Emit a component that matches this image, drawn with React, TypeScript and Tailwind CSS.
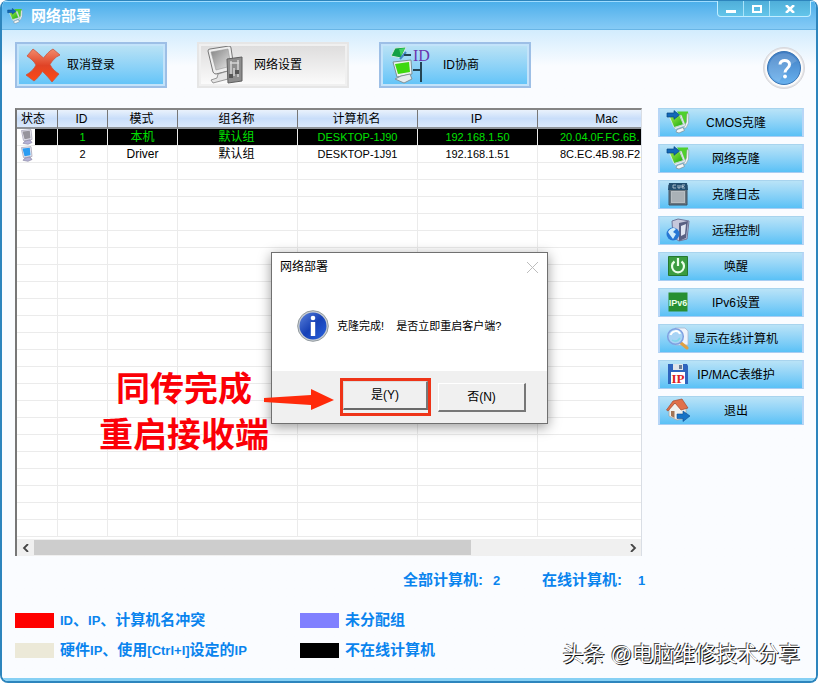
import type { ReactNode } from "react";

const CloneIcon = ({ className }: { className: string }) => (
  <svg viewBox="0 0 24 24" className={className} aria-hidden="true">
    <defs>
      <linearGradient id="screenGreen" x1="0" y1="0" x2="1" y2="1">
        <stop offset="0" stopColor="#a5ec4a" />
        <stop offset="1" stopColor="#12a80e" />
      </linearGradient>
    </defs>
    <path d="M11 1.500 L22 1.500 L22.500 9 L19 15 L15 8Z" fill="#4fd02c" />
    <path d="M21 3.500 L22.800 4 L22.500 13 L20 18 L17.500 18 L20.500 12Z" fill="#f2f6f7" stroke="#8b9da2" strokeWidth="0.6" />
    <path d="M3.500 7 L13.500 5 L17.500 14.500 L8 17.500Z" fill="url(#screenGreen)" stroke="#e4f2ea" strokeWidth="0.8" />
    <path d="M14 5 L15.500 5 L19.500 15.500 L9 19.500 L8.300 17.800 L17.500 14.600Z" fill="#eef3f4" stroke="#93a3a8" strokeWidth="0.4" />
    <path d="M11 19.500 L17 17.500 L18.500 20.500 L13 23 L10 22Z" fill="#f4f7f8" stroke="#7d8c92" strokeWidth="0.7" />
    <path d="M1 3h7V.6L13.500 5 8 9.300V7H1z" fill="#1268b8" stroke="#07457f" strokeWidth="0.7" />
  </svg>
);

const CrossIcon = () => (
  <svg viewBox="0 0 36 36" className="h-9 w-9 shrink-0" aria-hidden="true">
    <defs>
      <linearGradient id="crossRed" x1="0" y1="0" x2="0" y2="1">
        <stop offset="0" stopColor="#f28a6c" />
        <stop offset="0.5" stopColor="#e04326" />
        <stop offset="1" stopColor="#ff4a14" />
      </linearGradient>
    </defs>
    <path d="M8 2 C12 5 15 8 18.500 11 C21 8 24 4 28 2 L35 8 C30 10 27 14 25 17.500 C27 22 31 25 34 27 L27 35 C24 31 21 28 17.500 24.500 C15 28 12 32 9 34 L1 28 C6 25 9 22 11 18 C9 14 5 11 2 9Z" fill="url(#crossRed)" stroke="#c9563f" strokeWidth="0.8" />
  </svg>
);

const GrayComputer = () => (
  <svg viewBox="0 0 36 38" className="h-[38px] w-9 shrink-0" aria-hidden="true">
    <defs>
      <linearGradient id="grayScreen" x1="0" y1="0" x2="1" y2="1">
        <stop offset="0" stopColor="#858585" />
        <stop offset="1" stopColor="#e8e8e8" />
      </linearGradient>
    </defs>
    <path d="M1 5 Q1 3 3 3 L22 0 Q24 0 24 2 L27 22 Q27 24 25 24 L9 28 Q7 28 6 26Z" fill="#eee" stroke="#777" />
    <path d="M4 6 L21 3 L24 20 L9 24Z" fill="url(#grayScreen)" stroke="#999" strokeWidth="0.6" />
    <path d="M11 28l-1 4-6 2 2 3 15-4v-8z" fill="#e5e5e5" stroke="#808080" strokeWidth="0.8" />
    <path d="M20 13l15-2v24l-14 2z" fill="#8d8d8d" stroke="#5f5f5f" />
    <path d="M23 17h9M24 15v17M31 14v17M27 22v8" stroke="#d5d5d5" strokeWidth="1.500" />
    <path d="M22 28h4v4h-4zM28 24h4v4h-4z" fill="#555" />
  </svg>
);

const IdIcon = () => (
  <svg viewBox="0 0 42 38" className="h-[38px] w-[42px] shrink-0" aria-hidden="true">
    <path d="M6 2 L17 1 L12 12 L2 10Z" fill="#14a046" stroke="#d2e8df" />
    <path d="M10 3 L16 2 L12 10Z" fill="#3fd35f" />
    <path d="M11 13l6-7" stroke="#3f86c4" strokeWidth="2" />
    <path d="M15 9h7M24 24h8M32 16v20" stroke="#244453" strokeWidth="2" fill="none" />
    <path d="M4 16 L22 14 L23 28 L8 31Z" fill="#edf2f2" stroke="#7c9196" />
    <path d="M6 18 L20 16 L21 26 L9 28Z" fill="#3ed80f" />
    <path d="M12 30l9-2 2 5-8 4-9-4z" fill="#e6ecef" stroke="#83939a" />
    <text x="24" y="15" fill="#6a35ae" className="font-['Liberation_Serif',serif] text-[16px]">ID</text>
  </svg>
);

const HelpIcon = () => (
  <svg viewBox="0 0 44 44" className="h-11 w-11" aria-hidden="true">
    <defs>
      <linearGradient id="helpBlue" x1="0" y1="0" x2="0" y2="1">
        <stop offset="0" stopColor="#3f7cc2" />
        <stop offset="1" stopColor="#69b2ef" />
      </linearGradient>
    </defs>
    <circle cx="22" cy="22" r="20.500" fill="#e3e3e6" stroke="#d8d8dc" />
    <circle cx="22" cy="22" r="19" fill="#fbfbfb" />
    <circle cx="22" cy="22" r="16.500" fill="url(#helpBlue)" stroke="#3975b5" />
    <path d="M7 24a15 15 0 0 1 28-9C28 18 25 23 17 36A15 15 0 0 1 7 24z" fill="#fff" opacity="0.14" />
    <path d="M18 18.500c0-5.500 9.500-5.500 9.500 0 0 4-4.500 4-4.500 8" fill="none" stroke="#fff" strokeWidth="3" />
    <circle cx="23" cy="30.500" r="1.900" fill="#fff" />
  </svg>
);

const LogIcon = () => (
  <svg viewBox="0 0 24 24" className="h-6 w-6" aria-hidden="true">
    <path d="M3 3h18v20H3z" fill="#69757e" stroke="#3d5364" />
    <path d="M3 1h18l1 7H2z" fill="#234f70" />
    <path d="M5 9h14v12H5z" fill="#b8bec2" />
    <path d="M6 11h12M6 13h12M6 15h12M6 17h12M6 19h12" stroke="#8b959b" strokeWidth="0.6" />
    <path d="M10 3H7v3h3M12 3v3h2V3M19 3h-3v3h3M16 4.500h2" fill="none" stroke="#c2d1dc" strokeWidth="0.8" />
  </svg>
);

const RemoteIcon = () => (
  <svg viewBox="0 0 24 24" className="h-6 w-6" aria-hidden="true">
    <path d="M6 3l6-2 11 2-2 18-8 2-6-4z" fill="#c6c8dc" stroke="#71779b" />
    <path d="M13 5l9-2-2 17-7 3z" fill="#596083" />
    <path d="M15 8l5-2-1 10-4 2z" fill="#dfe4f1" />
    <circle cx="7" cy="16" r="6.500" fill="#2777d4" />
    <path d="M2 14c2-4 6-5 8-3l-3 3 3 2-3 5-3-4z" fill="#d0edfc" />
  </svg>
);

const PowerIcon = () => (
  <svg viewBox="0 0 24 24" className="h-6 w-6" aria-hidden="true">
    <path d="M2.500 2.500h19v19h-19z" fill="#3a9c40" stroke="#247931" />
    <path d="M8.500 7.500a6 6 0 1 0 7 0M12 4v8" fill="none" stroke="#e8ffe8" strokeWidth="2.200" />
  </svg>
);

const Ipv6Icon = () => (
  <svg viewBox="0 0 24 24" className="h-6 w-6" aria-hidden="true">
    <path d="M2.500 2.500h19v19h-19z" fill="#278f32" />
    <text x="12" y="16" textAnchor="middle" fill="#e8ffe8" className="font-['Liberation_Sans',sans-serif] text-[9px] font-bold">IPv6</text>
  </svg>
);

const SearchIcon = () => (
  <svg viewBox="0 0 24 24" className="h-6 w-6" aria-hidden="true">
    <path d="M9 2h10l3 3v14H9z" fill="#eff4fb" stroke="#a9b8cf" strokeWidth="0.8" />
    <path d="M15 17l6 5" stroke="#e0a042" strokeWidth="3" strokeLinecap="round" />
    <circle cx="9.500" cy="10.500" r="7.800" fill="#a8d4f5" stroke="#7f9fe0" strokeWidth="1.500" />
    <path d="M4.500 9c2-5 8-5 9.500-1" fill="none" stroke="#fff" strokeWidth="2" />
    <path d="M6 14c3 2 6 1 8-2" fill="none" stroke="#7fd6ea" strokeWidth="1.500" />
  </svg>
);

const DiskIcon = () => (
  <svg viewBox="0 0 24 24" className="h-6 w-6" aria-hidden="true">
    <path d="M2 2h19l1 2v18H2z" fill="#2e64bd" />
    <path d="M7 2h10v6H7z" fill="#e0e4ea" />
    <path d="M13 3h3v4h-3z" fill="#6b7b94" />
    <path d="M5 10h14v12H5z" fill="#fff" />
    <text x="12" y="21" textAnchor="middle" fill="#dc2222" className="font-['Liberation_Serif',serif] text-[13px] font-bold">IP</text>
  </svg>
);

const ExitIcon = () => (
  <svg viewBox="0 0 24 24" className="h-6 w-6" aria-hidden="true">
    <path d="M3 11l6-6 11 5v10l-9 2-8-4z" fill="#f0f1ef" stroke="#a5a19c" strokeWidth="0.7" />
    <path d="M0.500 12L7 3l9-2 6 9-7 2-6-7-7 8z" fill="#e0704a" stroke="#a3482d" strokeWidth="0.7" />
    <path d="M5 13h3.500v7L5 18z" fill="#a27454" />
    <path d="M11 16h6v-3l7 5-7 5.500v-3h-6z" fill="#1773c6" stroke="#0b4d91" strokeWidth="0.6" />
  </svg>
);

const StatusIcon = ({ online }: { online: boolean }) => (
  <svg viewBox="0 0 14 16" className="ml-[3px] block h-4 w-[14px]" role="img" aria-label={online ? "在线" : "本机"}>
    <path d="M1.500 1.500l9.500-.8 1 9.800-8.500 1z" fill="#ecebf3" stroke="#a6a4b8" strokeWidth="0.8" />
    <path d="M2.500 2.500l7.300-.7.700 7.500-6 .9z" fill={online ? "#2c9df2" : "#96949c"} />
    <path d="M5 12l5-1 2 2.500-4 1.800-5-1z" fill="#b5b2d6" stroke="#7f7c9c" strokeWidth="0.6" />
  </svg>
);

const InfoIcon = () => (
  <svg viewBox="0 0 32 32" className="h-8 w-8 shrink-0" aria-hidden="true">
    <defs>
      <linearGradient id="infoBlue" x1="0" y1="0" x2="1" y2="1">
        <stop offset="0" stopColor="#5c83db" />
        <stop offset="0.5" stopColor="#1741b6" />
        <stop offset="1" stopColor="#2a64de" />
      </linearGradient>
    </defs>
    <circle cx="16" cy="16" r="15.300" fill="#c9ced3" stroke="#929a9f" />
    <circle cx="16" cy="16" r="13.500" fill="url(#infoBlue)" />
    <circle cx="16" cy="8" r="2.300" fill="#fff" />
    <path d="M13.800 12h4.400v14h-4.400z" fill="#fff" />
  </svg>
);

const toolButton = "flex h-[46px] w-[152px] items-center border-2 pl-2 text-xs";

const sideItems: { label: string; icon: ReactNode }[] = [
  { label: "CMOS克隆", icon: <CloneIcon className="h-6 w-6" /> },
  { label: "网络克隆", icon: <CloneIcon className="h-6 w-6" /> },
  { label: "克隆日志", icon: <LogIcon /> },
  { label: "远程控制", icon: <RemoteIcon /> },
  { label: "唤醒", icon: <PowerIcon /> },
  { label: "IPv6设置", icon: <Ipv6Icon /> },
  { label: "显示在线计算机", icon: <SearchIcon /> },
  { label: "IP/MAC表维护", icon: <DiskIcon /> },
  { label: "退出", icon: <ExitIcon /> },
];

const columns = [
  { name: "状态", width: "w-[41px]", pad: "pr-2" },
  { name: "ID", width: "w-[50px]", pad: "pr-0.5" },
  { name: "模式", width: "w-[70px]", pad: "pr-0.5" },
  { name: "组名称", width: "w-[120px]", pad: "pr-0.5" },
  { name: "计算机名", width: "w-[120px]", pad: "pr-0.5" },
  { name: "IP", width: "w-[120px]", pad: "pr-0.5" },
  { name: "Mac", width: "w-[140px]", pad: "pr-0.5" },
];

const rows = [
  { id: "1", mode: "本机", group: "默认组", name: "DESKTOP-1J90", ip: "192.168.1.50", mac: "20.04.0F.FC.6B.", self: true },
  { id: "2", mode: "Driver", group: "默认组", name: "DESKTOP-1J91", ip: "192.168.1.51", mac: "8C.EC.4B.98.F2.", self: false },
];

const En = ({ children }: { children: ReactNode }) => <span className="text-[13px]">{children}</span>;

const Legend = ({ color, children }: { color: string; children: ReactNode }) => (
  <div className="flex h-[30px] items-center gap-[6px]">
    <span className={`h-[15px] w-[39px] shrink-0 ${color}`} />
    <span className="whitespace-nowrap">{children}</span>
  </div>
);

function ComputerTable() {
  return (
    <div className="relative min-w-0 flex-1 border-t-2 border-r border-l-2 border-t-[#858585] border-r-[#d9dee5] border-l-[#777] bg-white">
      <div className="h-[429px] overflow-hidden">
        <table className="w-[661px] table-fixed border-separate border-spacing-0">
          <thead>
            <tr>
              {columns.map((c) => (
                <th key={c.name} className={`${c.width} ${c.pad} h-[19px] border-r border-b-2 border-r-[#777] border-b-[#8f9398] bg-linear-to-b from-[#eaf2fc] via-[#c9defa] to-[#dbe9fc] py-0 pl-0 text-xs leading-4 font-normal`}>
                  {c.name}
                </th>
              ))}
            </tr>
          </thead>
          <tbody>
            {rows.map((r) => {
              const cell = `h-[17px] border-r border-b border-[#ebebeb] py-0 leading-4 whitespace-nowrap ${r.self ? "bg-black text-[#00e000]" : ""}`;
              return (
                <tr key={r.id} className="text-center text-[11px]">
                  <td className={`h-[17px] border-r border-b border-[#ebebeb] p-0 ${r.self ? "bg-linear-to-r from-white from-45% to-black to-45%" : ""}`}>
                    <StatusIcon online={!r.self} />
                  </td>
                  <td className={`${cell} px-0`}>{r.id}</td>
                  <td className={`${cell} px-0 text-xs`}>{r.mode}</td>
                  <td className={`${cell} pr-0.5 pl-0 text-xs`}>{r.group}</td>
                  <td className={`${cell} px-0`}>{r.name}</td>
                  <td className={`${cell} px-0`}>{r.ip}</td>
                  <td className={`${cell} pr-0 pl-[22px] text-left`}>{r.mac}</td>
                </tr>
              );
            })}
            {Array.from({ length: 22 }, (_, i) => (
              <tr key={i}>
                {columns.map((c) => (
                  <td key={c.name} className="h-[17px] border-r border-b border-[#ebebeb] p-0" />
                ))}
              </tr>
            ))}
          </tbody>
        </table>
      </div>
      <div className="flex h-[17px] bg-[#f0f0f0]">
        <button aria-label="向左滚动" className="flex w-[17px] items-center justify-center">
          <svg viewBox="0 0 8 8" className="h-2 w-2"><path d="M6 0L2 4l4 4" fill="none" stroke="#444" strokeWidth="1.800" /></svg>
        </button>
        <div className="my-px flex-1"><div className="h-full w-[74%] bg-[#cdcdcd]" /></div>
        <button aria-label="向右滚动" className="flex w-[17px] items-center justify-center">
          <svg viewBox="0 0 8 8" className="h-2 w-2"><path d="M2 0l4 4-4 4" fill="none" stroke="#444" strokeWidth="1.800" /></svg>
        </button>
      </div>

      <p className="absolute top-[256px] left-[82px] text-center text-[34px] leading-[46px] font-bold whitespace-nowrap text-[#fb0007] [text-shadow:0_0_2px_#fff]">
        同传完成
        <br />
        重启接收端
      </p>
      <ConfirmDialog />
    </div>
  );
}

function ConfirmDialog() {
  return (
    <div role="dialog" aria-labelledby="dialog-title" className="absolute top-[142px] left-[254px] w-[277px] border border-[#707070] bg-white shadow-[0_3px_12px_rgba(0,0,0,0.4)]">
      <div className="flex h-7 items-center justify-between pr-[9px] pl-2">
        <h2 id="dialog-title" className="text-xs">网络部署</h2>
        <button aria-label="关闭" className="h-[11px] w-[11px]">
          <svg viewBox="0 0 11 11" className="h-[11px] w-[11px]"><path d="M0 0l11 11M11 0L0 11" stroke="#bdbdbd" /></svg>
        </button>
      </div>
      <div className="flex h-[90px] items-center gap-2 pl-[25px]">
        <InfoIcon />
        <p className="text-[11px] whitespace-pre">克隆完成!    是否立即重启客户端?</p>
      </div>
      <div className="flex h-[52px] items-center gap-[7px] bg-[#f0f0f0] pl-[68px] text-xs">
        <div className="border-[3px] border-[#ee3418] pb-[3px]">
          <button className="block h-[29px] w-[85px] border-t border-r-2 border-b-2 border-l border-t-[#ddd] border-r-[#777] border-b-[#696969] border-l-[#ddd] bg-[#f0f0f0]">是(Y)</button>
        </div>
        <button className="h-[29px] w-[88px] border-t border-r-2 border-b-2 border-l border-t-white border-r-[#777] border-b-[#777] border-l-white">否(N)</button>
      </div>
      <svg viewBox="0 0 72 24" className="absolute top-[135px] -left-2 h-6 w-[72px]" aria-hidden="true">
        <path d="M0 10l47-3V1l23 11-23 10v-5L0 14z" fill="#ff2a0a" />
      </svg>
    </div>
  );
}

export default function App() {
  return (
    <main className="relative flex min-h-screen flex-col overflow-hidden rounded-t-lg rounded-b-lg border-x-2 border-b-2 border-[#2d85bd] bg-[#fafcff] font-['Liberation_Sans','Noto_Sans_CJK_SC',sans-serif] text-black">
      <header className="flex h-[30px] shrink-0 items-start justify-between border-t border-b border-t-[#2d85bd] border-b-[#68b5e6] bg-linear-to-b from-[#49aeea] to-[#86cbf6] shadow-[inset_0_1px_0_#9edcff]">
        <div className="flex h-[30px] items-center gap-2 pl-[5px]">
          <CloneIcon className="h-4 w-4" />
          <h1 className="text-[15px] font-bold text-white">网络部署</h1>
        </div>
        <div className="mr-[5px] flex h-4 divide-x divide-[#a9e3fa] rounded-b-sm border border-t-0 border-[#c0edff] bg-linear-to-b from-[#4faed9] to-[#63c5ea]">
          <button aria-label="最小化" className="flex w-[26px] items-end justify-center pb-[3px]"><span className="h-[3px] w-[10px] bg-white" /></button>
          <button aria-label="最大化" className="flex w-[26px] items-center justify-center"><span className="h-2 w-[10px] border-2 border-white" /></button>
          <button aria-label="关闭窗口" className="flex w-[40px] items-center justify-center">
            <svg viewBox="0 0 10 8" className="h-2 w-[10px]"><path d="M1 0l8 8M9 0L1 8" stroke="#fff" strokeWidth="2.500" /></svg>
          </button>
        </div>
      </header>

      <div className="flex flex-1 flex-col border-b-[3px] border-[#86d0f4] bg-linear-to-b from-[#d2ecfd] to-[#fafcff] to-[36px] pr-3 pl-[13px]">
        <div className="flex h-[78px] shrink-0 items-start gap-[30px] pt-3">
          <button className={`${toolButton} border-[#9dbfe6] bg-linear-to-b from-[#bce3f5] to-[#5ec3f8] shadow-[inset_0_0_0_2px_#c3e3fa]`}>
            <CrossIcon />
            <span className="pl-[6px]">取消登录</span>
          </button>
          <button className={`${toolButton} border-[#e6e6e6] bg-linear-to-b from-[#dddcdc] to-[#fcfcfc] shadow-[inset_0_0_0_2px_#f0f0f0]`}>
            <GrayComputer />
            <span className="pl-[11px]">网络设置</span>
          </button>
          <button className={`${toolButton} border-[#9dbfe6] bg-linear-to-b from-[#bce3f5] to-[#5ec3f8] shadow-[inset_0_0_0_2px_#c3e3fa]`}>
            <IdIcon />
            <span className="pl-3">ID协商</span>
          </button>
          <button aria-label="帮助" className="-mr-0.5 ml-auto pt-1"><HelpIcon /></button>
        </div>

        <div className="flex items-start gap-4">
          <ComputerTable />
          <nav className="flex w-[146px] shrink-0 flex-col gap-[7px]">
            {sideItems.map((item) => (
              <button key={item.label} className="relative flex h-[29px] items-center justify-center border-x-2 border-t border-b border-x-[#b7d6f7] border-t-[#a8d4ee] border-b-[#a8cdf2] bg-linear-to-b from-[#b9e3f7] to-[#59c1f6] pl-[10px] text-xs whitespace-nowrap">
                <span className="absolute top-px left-[6px]">{item.icon}</span>
                <span className="relative">{item.label}</span>
              </button>
            ))}
          </nav>
        </div>

        <div className="flex h-[49px] items-center pl-[388px] text-[15px] font-bold text-[#0a84ee]">
          <p className="w-[139px] whitespace-nowrap">全部计算机:<span className="pl-[10px]"><En>2</En></span></p>
          <p className="whitespace-nowrap">在线计算机:<span className="pl-4"><En>1</En></span></p>
        </div>

        <div className="grid grid-cols-[285px_1fr] pb-3 text-[15px] font-bold text-[#0a84ee]">
          <Legend color="bg-[#ff0000]"><En>ID</En>、<En>IP</En>、计算机名冲突</Legend>
          <Legend color="bg-[#8080ff]">未分配组</Legend>
          <Legend color="bg-[#ece9d8]">硬件<En>IP</En>、使用<En>[Ctrl+I]</En>设定的<En>IP</En></Legend>
          <Legend color="bg-black">不在线计算机</Legend>
        </div>
      </div>

      <p className="absolute right-4 bottom-3 text-[21px] leading-[30px] whitespace-nowrap text-white [text-shadow:1px_1px_0_#111,-1px_-1px_0_#555]">头条 @电脑维修技术分享</p>
    </main>
  );
}
